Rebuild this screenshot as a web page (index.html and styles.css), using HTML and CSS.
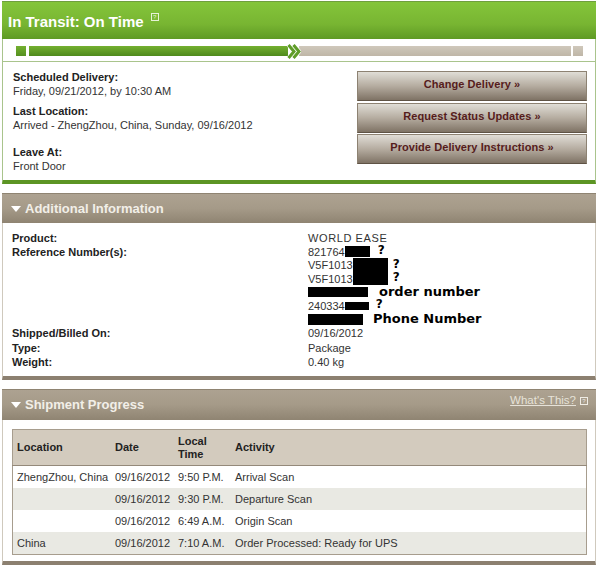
FILE: index.html
```html
<!DOCTYPE html>
<html lang="en">

<head>
    <meta charset="UTF-8">
    <title>In Transit: On Time</title>
    <link rel="stylesheet" href="styles.css">
</head>

<body>

    <!-- Status panel -->
    <div class="panel status-panel">
        <div class="status-head">
            <h1>In Transit: On Time</h1>
            <span class="help-box help-light">?</span>
        </div>
        <div class="progress">
            <span class="seg seg-start"></span>
            <span class="seg seg-done"></span>
            <svg class="chevron" width="14" height="17" viewBox="0 0 14 17" fill="none" stroke-width="3">
                <path d="M1 1 L7 8.5 L1 16 M6 1 L12 8.5 L6 16" stroke="white" stroke-width="4.5"/>
                <path d="M1.5 2 L7 8.5 L1.5 15" stroke="#5f9c28"/>
                <path d="M6.5 2 L12 8.5 L6.5 15" stroke="#5f9c28"/>
            </svg>
            <span class="seg seg-todo"></span>
            <span class="seg seg-end"></span>
        </div>
        <div class="status-body">
            <div class="status-info">
                <div class="info-block">
                    <strong>Scheduled Delivery:</strong>
                    <div>Friday, 09/21/2012, by 10:30 AM</div>
                </div>
                <div class="info-block">
                    <strong>Last Location:</strong>
                    <div>Arrived - ZhengZhou, China, Sunday, 09/16/2012</div>
                </div>
                <div class="info-block leave-at">
                    <strong>Leave At:</strong>
                    <div>Front Door</div>
                </div>
            </div>
            <div class="actions">
                <a href="#" class="action-btn">Change Delivery »</a>
                <a href="#" class="action-btn">Request Status Updates »</a>
                <a href="#" class="action-btn">Provide Delivery Instructions »</a>
            </div>
        </div>
    </div>

    <!-- Additional information -->
    <div class="panel tan-panel">
        <div class="tan-head">
            <span class="arrow"></span>
            <h2>Additional Information</h2>
        </div>
        <div class="details">
            <div class="detail-row">
                <strong>Product:</strong>
                <div class="product-name">WORLD EASE</div>
            </div>
            <div class="detail-row">
                <strong>Reference Number(s):</strong>
                <div class="ref-list">
                    <div>821764<span class="redact r1"></span><span class="scrawl q1">?</span></div>
                    <div>V5F1013<span class="redact r2"></span><span class="scrawl q2">?</span></div>
                    <div>V5F1013<span class="redact r2b"></span><span class="scrawl q2">?</span></div>
                    <div><span class="redact r3"></span><span class="scrawl note1">order number</span></div>
                    <div>240334<span class="redact r4"></span><span class="scrawl q4">?</span></div>
                    <div><span class="redact r5"></span><span class="scrawl note2">Phone Number</span></div>
                </div>
            </div>
            <div class="detail-row shipped">
                <strong>Shipped/Billed On:</strong>
                <div>09/16/2012</div>
            </div>
            <div class="detail-row">
                <strong>Type:</strong>
                <div>Package</div>
            </div>
            <div class="detail-row">
                <strong>Weight:</strong>
                <div>0.40 kg</div>
            </div>
        </div>
    </div>

    <!-- Shipment progress -->
    <div class="panel tan-panel">
        <div class="tan-head progress-head">
            <span class="arrow"></span>
            <h2>Shipment Progress</h2>
            <a href="#" class="whats-this">What's This?</a>
            <span class="help-box help-small">?</span>
        </div>
        <div class="table-wrap">
            <table class="progress-table">
                <thead>
                    <tr>
                        <th class="col-loc">Location</th>
                        <th class="col-date">Date</th>
                        <th class="col-time">Local<br>Time</th>
                        <th>Activity</th>
                    </tr>
                </thead>
                <tbody>
                    <tr>
                        <td>ZhengZhou, China</td>
                        <td>09/16/2012</td>
                        <td>9:50 P.M.</td>
                        <td>Arrival Scan</td>
                    </tr>
                    <tr class="alt">
                        <td></td>
                        <td>09/16/2012</td>
                        <td>9:30 P.M.</td>
                        <td>Departure Scan</td>
                    </tr>
                    <tr>
                        <td></td>
                        <td>09/16/2012</td>
                        <td>6:49 A.M.</td>
                        <td>Origin Scan</td>
                    </tr>
                    <tr class="alt">
                        <td>China</td>
                        <td>09/16/2012</td>
                        <td>7:10 A.M.</td>
                        <td>Order Processed: Ready for UPS</td>
                    </tr>
                </tbody>
            </table>
        </div>
    </div>

</body>

</html>
```

FILE: styles.css
```css
html,
body {
    margin: 0;
    padding: 0;
    background: white;
}

body {
    padding: 1px 4px 0 2px;
    font-family: "Liberation Sans", Arial, sans-serif;
    font-size: 11px;
    line-height: 14px;
    color: #333;
}

strong {
    color: #222;
}

.panel {
    background: white;
    box-sizing: border-box;
    border-left: 1px solid #a9c48c;
    border-right: 1px solid #a9c48c;
}

/* Status panel */
.status-panel {
    height: 183px;
    border-bottom: 4px solid #5c9524;
}

.status-head {
    height: 38px;
    box-sizing: border-box;
    margin: 0 -1px;
    padding: 9px 0 0 6px;
    display: flex;
    align-items: flex-start;
    background: linear-gradient(#84c53a, #78b532 60%, #5e9a24);
    border-top: 1px solid #6f9f3e;
}

.status-head h1 {
    margin: 0;
    font-size: 15px;
    line-height: 21px;
    font-weight: bold;
    color: white;
}

.help-box {
    display: block;
    box-sizing: border-box;
    border: 1px solid;
    text-align: center;
}

.help-light {
    width: 8px;
    height: 8px;
    margin: 2px 0 0 7px;
    font-size: 6px;
    line-height: 6px;
    color: #e6f2d6;
}

.progress {
    height: 23px;
    box-sizing: border-box;
    padding: 7px 12px 5px 13px;
    display: flex;
    align-items: center;
    border-bottom: 1px solid #a9c48c;
}

.seg {
    display: block;
    height: 10px;
}

.seg-start {
    width: 10px;
    background: linear-gradient(#74b030, #559020);
    margin-right: 3px;
}

.seg-done {
    width: 259px;
    background: linear-gradient(#74b030, #4f8a1c);
}

.chevron {
    margin: 0 -2px 0 -1px;
    position: relative;
    z-index: 1;
}

.seg-todo {
    flex: 1;
    background: linear-gradient(#cfc8bb, #bfb6a7);
    margin-right: 2px;
}

.seg-end {
    width: 10px;
    background: linear-gradient(#cfc8bb, #bfb6a7);
}

.status-body {
    display: flex;
    justify-content: space-between;
    padding: 8px 8px 0 10px;
}

.info-block {
    margin-bottom: 6px;
}

.leave-at {
    margin-top: 13px;
}

.actions {
    width: 230px;
    display: flex;
    flex-direction: column;
    gap: 1.5px;
    padding-top: 1px;
}

.action-btn {
    display: block;
    height: 30px;
    box-sizing: border-box;
    border: 1px solid #8d8272;
    border-bottom-color: #5f5345;
    background: linear-gradient(#e0ddd6, #b5aca0 50%, #7f7365);
    color: #561c1c;
    font-size: 11px;
    letter-spacing: 0.07px;
    font-weight: bold;
    line-height: 25px;
    text-align: center;
    text-decoration: none;
}

/* Tan panels */
.tan-panel {
    margin-top: 9px;
    border-color: #cfc9bd;
    border-bottom: 4px solid #8c8070;
}

.tan-head {
    height: 30px;
    box-sizing: border-box;
    margin: 0 -1px;
    padding-left: 9px;
    display: flex;
    align-items: center;
    background: linear-gradient(#ada291, #a59a88 50%, #8f8472);
    border-top: 1px solid #8f8472;
}

.tan-head h2 {
    margin: 0;
    font-size: 13px;
    font-weight: bold;
    color: #f2efe8;
}

.arrow {
    width: 0;
    height: 0;
    margin-right: 4px;
    border-left: 5px solid transparent;
    border-right: 5px solid transparent;
    border-top: 6px solid white;
}

.details {
    padding: 8px 0 7px 9px;
}

.detail-row {
    display: grid;
    grid-template-columns: 296px 1fr;
}

.product-name {
    letter-spacing: 0.6px;
}

.shipped {
    margin-bottom: 1px;
}

.ref-list > div {
    display: flex;
    align-items: center;
    height: 13.5px;
}

.redact {
    display: block;
    background: black;
}

.r1 { width: 25px; height: 11px; }
.r2 { width: 35px; height: 20px; margin-top: 6px; }
.r2b { width: 35px; height: 20px; margin-top: -8px; }
.r3 { width: 60px; height: 10px; }
.r4 { width: 24px; height: 8px; }
.r5 { width: 55px; height: 11px; }

.scrawl {
    font-family: "DejaVu Sans", sans-serif;
    font-size: 12px;
    line-height: 10px;
    font-weight: bold;
    color: black;
}

.q1 { margin: -3px 0 0 8px; }
.q2 { margin: -3px 0 0 5px; }
.q4 { margin: -4px 0 0 7px; }

.note1 {
    margin-left: 11px;
    font-size: 13px;
}

.note2 {
    margin-left: 10px;
    font-size: 13px;
}

/* Shipment progress */
.progress-head {
    height: 31px;
}

.whats-this {
    margin: -10px 4px 0 auto;
    font-size: 11.5px;
    color: #e6e2d8;
}

.help-small {
    width: 8px;
    height: 8px;
    margin: -9px 8px 0 0;
    font-size: 6px;
    line-height: 6px;
    color: #efece4;
}

.table-wrap {
    padding: 9px 8px 6px 9px;
}

.progress-table {
    width: 100%;
    table-layout: fixed;
    border-collapse: collapse;
    border: 1px solid #a79d8e;
    color: #333;
}

.progress-table th {
    height: 35px;
    padding: 0 0 0 4px;
    text-align: left;
    background: #d3cbbe;
    border-bottom: 1px solid #94897a;
    line-height: 13px;
    color: #222;
}

.progress-table td {
    height: 22px;
    padding: 0 0 0 4px;
}

.progress-table .alt td {
    background: #e9e9e3;
}

.col-loc { width: 94px; }
.col-date { width: 59px; }
.col-time { width: 53px; }
```
